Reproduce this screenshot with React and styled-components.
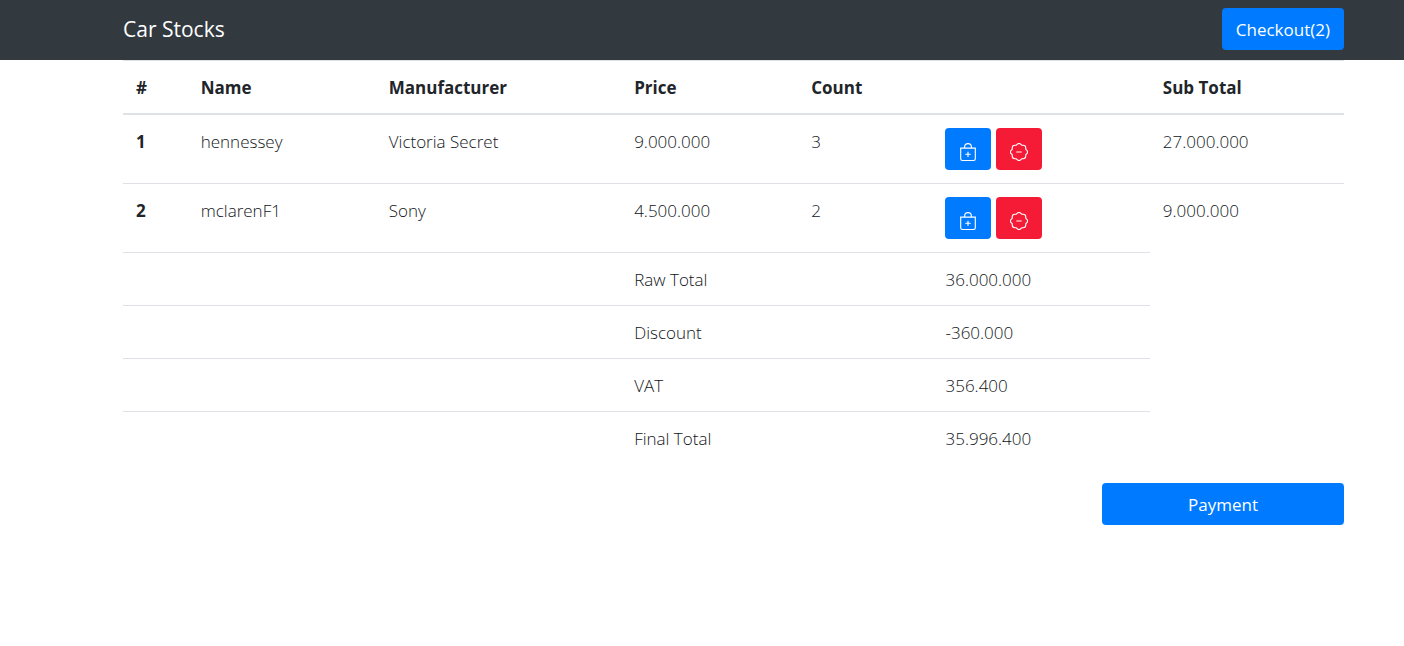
import React from "react";
import styled, { createGlobalStyle } from "styled-components";
import { BsBagPlus, BsPatchMinus } from "react-icons/bs";

const GlobalStyle = createGlobalStyle`
  *, *::before, *::after { box-sizing: border-box; }
  body {
    margin: 0;
    background: #fff;
    color: #212529;
    font-family: "Segoe UI", "Open Sans", "Noto Sans", sans-serif;
    font-size: 17px;
    font-weight: 300;
    line-height: 26px;
  }
`;

const Navbar = styled.nav`
  background: #32393f;
  padding: 8px 0 10px;
`;

const Container = styled.div`
  margin: 0 60px 0 123px;
`;

const NavInner = styled(Container)`
  display: flex;
  align-items: center;
  justify-content: space-between;
  min-height: 42px;
`;

const Brand = styled.a`
  color: #fff;
  font-size: 21px;
  font-weight: 400;
  text-decoration: none;
`;

const Button = styled.button`
  display: inline-block;
  padding: 8px 13px 6px;
  border: 1px solid transparent;
  border-radius: 4px;
  background: ${({ $danger }) => ($danger ? "#f51b37" : "#007bff")};
  color: #fff;
  font: inherit;
  font-weight: 400;
  cursor: pointer;
`;

const IconButton = styled(Button)`
  display: flex;
  align-items: center;
  justify-content: center;
  width: 46px;
  height: 42px;
  padding: 6px 0 0;
`;

const Actions = styled.div`
  display: flex;
  gap: 5px;
`;

const Table = styled.table`
  width: 100%;
  border-collapse: collapse;
  table-layout: fixed;
`;

const Col = styled.col`
  width: ${({ $share }) => $share}%;
`;

const Cell = styled.td`
  padding: ${({ $controls }) => ($controls ? "13px" : "14px 13px 12px")};
  border-top: 1px solid #dee2e6;
  color: #111518;
  text-align: left;
  vertical-align: top;
`;

const HeadCell = styled(Cell)`
  border-bottom: 2px solid #dee2e6;
  color: #212529;
  font-weight: 700;
`;

const RowNumber = styled(Cell)`
  color: #212529;
  font-weight: 700;
`;

const Footer = styled.div`
  display: flex;
  justify-content: flex-end;
  margin-top: 19px;
`;

const PaymentButton = styled(Button)`
  width: 242px;
`;

const cols = [5.3, 15.4, 20.1, 14.5, 11, 17.8, 15.9];

const cars = [
  { name: "hennessey", maker: "Victoria Secret", price: "9.000.000", count: 3, total: "27.000.000" },
  { name: "mclarenF1", maker: "Sony", price: "4.500.000", count: 2, total: "9.000.000" },
];

const totals = [
  ["Raw Total", "36.000.000"],
  ["Discount", "-360.000"],
  ["VAT", "356.400"],
  ["Final Total", "35.996.400"],
];

export default function App() {
  return (
    <>
      <GlobalStyle />
      <Navbar>
        <NavInner>
          <Brand href="#">Car Stocks</Brand>
          <Button type="button">Checkout(2)</Button>
        </NavInner>
      </Navbar>
      <Container as="main">
        <Table>
          <colgroup>
            {cols.map((share, i) => <Col key={i} $share={share} />)}
          </colgroup>
          <thead>
            <tr>
              {["#", "Name", "Manufacturer", "Price", "Count", "", "Sub Total"].map((label, i) => (
                <HeadCell as={label ? "th" : "td"} scope={label ? "col" : undefined} key={i}>{label}</HeadCell>
              ))}
            </tr>
          </thead>
          <tbody>
            {cars.map((car, i) => (
              <tr key={car.name}>
                <RowNumber as="th" scope="row">{i + 1}</RowNumber>
                <Cell>{car.name}</Cell>
                <Cell>{car.maker}</Cell>
                <Cell>{car.price}</Cell>
                <Cell>{car.count}</Cell>
                <Cell $controls>
                  <Actions>
                    <IconButton type="button" aria-label={`Add one ${car.name}`}><BsBagPlus size={18} /></IconButton>
                    <IconButton type="button" $danger aria-label={`Remove one ${car.name}`}><BsPatchMinus size={18} /></IconButton>
                  </Actions>
                </Cell>
                <Cell>{car.total}</Cell>
              </tr>
            ))}
            {totals.map(([label, value]) => (
              <tr key={label}>
                <Cell colSpan={3} />
                <Cell colSpan={2}>{label}</Cell>
                <Cell>{value}</Cell>
              </tr>
            ))}
          </tbody>
        </Table>
        <Footer>
          <PaymentButton type="button">Payment</PaymentButton>
        </Footer>
      </Container>
    </>
  );
}
